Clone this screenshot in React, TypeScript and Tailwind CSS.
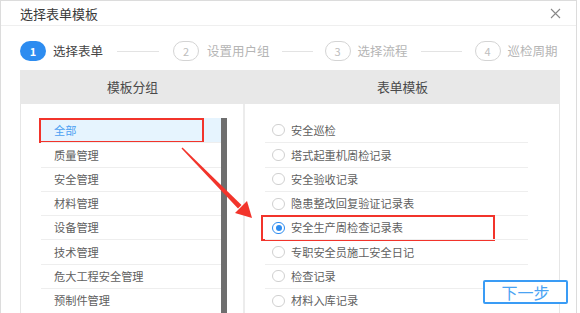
import React from "react";

const groups = ["全部", "质量管理", "安全管理", "材料管理", "设备管理", "技术管理", "危大工程安全管理", "预制件管理"];
const forms = ["安全巡检", "塔式起重机周检记录", "安全验收记录", "隐患整改回复验证记录表", "安全生产周检查记录表", "专职安全员施工安全日记", "检查记录", "材料入库记录"];

function StepCircle({ n, active }: { n: number; active?: boolean }) {
  return active ? (
    <span className="flex h-[20px] w-[26px] items-center justify-center rounded-full bg-[#2d8cf0] text-[11px] font-semibold text-white">{n}</span>
  ) : (
    <span className="flex h-[20px] w-[26px] items-center justify-center rounded-full border border-[#d4d4d4] text-[11px] text-[#bdbdbd]">{n}</span>
  );
}

export default function App() {
  return (
    <div
      className="relative h-[313px] w-[580px] overflow-hidden bg-white"
      style={{ fontFamily: '"Noto Sans CJK SC", "Noto Sans", sans-serif' }}
    >
      <div className="h-[313px] w-[577px] border-x border-t border-[#dcdcdc]">
        {/* title bar */}
        <div className="flex h-[25px] items-center justify-between border-b border-[#efefef] pl-[19px] pr-[15px]">
          <span className="text-[13px] leading-none text-[#3a3a3a]">选择表单模板</span>
          <svg width="11" height="11" viewBox="0 0 11 11" className="text-[#888]">
            <path d="M1 1L10 10M10 1L1 10" stroke="currentColor" strokeWidth="1.1" />
          </svg>
        </div>

        {/* steps */}
        <div className="flex h-[20px] items-center pl-[19px] mt-[15px] text-[12.5px] leading-none">
          <StepCircle n={1} active />
          <span className="ml-[7px] text-[#444]">选择表单</span>
          <span className="mx-[14px] h-px w-[42px] bg-[#e3e3e3]" />
          <StepCircle n={2} />
          <span className="ml-[8px] text-[#b5b5b5]">设置用户组</span>
          <span className="mx-[12px] h-px w-[31px] bg-[#e3e3e3]" />
          <StepCircle n={3} />
          <span className="ml-[7px] text-[#b5b5b5]">选择流程</span>
          <span className="mx-[13px] h-px w-[41px] bg-[#e3e3e3]" />
          <StepCircle n={4} />
          <span className="ml-[7px] text-[#b5b5b5]">巡检周期</span>
        </div>

        {/* table */}
        <div className="ml-[19px] mt-[9px] w-[540px]">
          <div className="flex h-[34px] bg-[#e8e8e8] text-[12.8px] text-[#4a4a4a]">
            <div className="flex w-[225px] items-center justify-center">模板分组</div>
            <div className="flex flex-1 items-center justify-center">表单模板</div>
          </div>
          <div className="flex h-[210px] border-l border-r border-[#e6e6e6]">
            {/* left panel */}
            <div className="flex w-[224px] border-r-2 border-[#ececec] pl-[20px] pt-[14px]">
              <div className="w-[180px]">
                {groups.map((g, i) => (
                  <div
                    key={g}
                    className={`relative flex h-[24.3px] items-center pl-[13px] text-[11.2px] ${
                      i === 0 ? "bg-[#e6f4fe] text-[#4b9ff2]" : "border-t border-[#eeeeee] text-[#606060]"
                    }`}
                  >
                    {g}
                    {i === 0 && (
                      <span className="absolute left-[-2px] top-0 h-[25px] w-[165px] border-2 border-[#f2342b]" />
                    )}
                  </div>
                ))}
              </div>
              <div className="w-[6px] bg-[#6e6e6e]" />
            </div>

            {/* right panel */}
            <div className="flex-1 pl-[20px] pt-[14px]">
              <div className="w-[263px]">
                {forms.map((f, i) => (
                  <div
                    key={f}
                    className={`relative flex h-[24.3px] items-center pl-[7px] text-[11.2px] text-[#606060] ${
                      i === 0 ? "" : "border-t border-[#eeeeee]"
                    }`}
                  >
                    {i === 4 ? (
                      <span className="flex h-[12px] w-[13px] items-center justify-center rounded-full border border-[#2d8cf0]">
                        <span className="h-[6px] w-[6px] rounded-full bg-[#2d8cf0]" />
                      </span>
                    ) : (
                      <span className="h-[12px] w-[13px] rounded-full border border-[#d0d0d0]" />
                    )}
                    <span className="ml-[6px]">{f}</span>
                    {i === 4 && (
                      <span className="absolute left-[-4px] top-[-1px] h-[26px] w-[234px] border-2 border-[#f2342b]" />
                    )}
                  </div>
                ))}
              </div>
            </div>
          </div>
        </div>
      </div>

      {/* next button */}
      <button className="absolute left-[483px] top-[280px] flex h-[24px] w-[85px] items-center justify-center rounded-[2px] border-2 border-[#3a9cf5] bg-white text-[16px] leading-none text-[#4aa3f3]">
        下一步
      </button>

      {/* annotation arrow */}
      <svg className="pointer-events-none absolute left-0 top-0" width="580" height="313" viewBox="0 0 580 313">
        <polygon points="181.5,148.5 182.5,147.5 241.5,205 238,208.5" fill="#f2342b" />
        <polygon points="252,218 247,201 235,213" fill="#f2342b" />
      </svg>
    </div>
  );
}
